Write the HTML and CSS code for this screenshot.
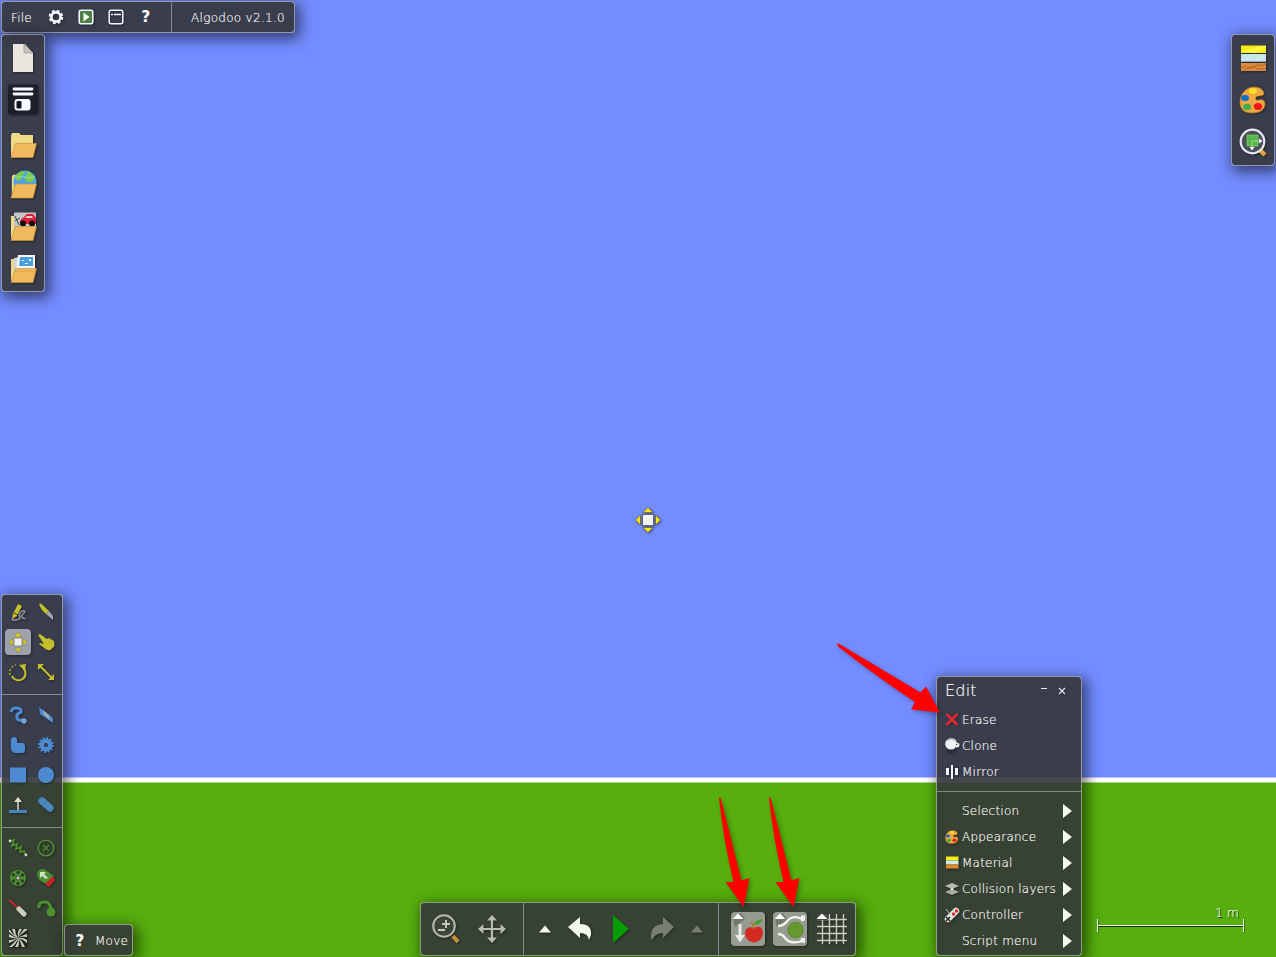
FILE: index.html
```html
<!DOCTYPE html>
<html lang="en">
<head>
<meta charset="utf-8">
<title>Algodoo v2.1.0</title>
<link rel="stylesheet" href="styles.css">
</head>
<body>
<svg class="defs" width="0" height="0">
  <defs>
    <symbol id="palette" viewBox="-14 -14 28 28">
      <path d="M1-13C-7-13-13-6-13 2c0 8 5 11 12 11 9 0 13-4 13-9 0-4-3-5-6-4C3 1 2-1 3-3c2-2 6 0 8-3C11-10 7-13 1-13z" fill="#efa944" stroke="#b97722" stroke-width=".7"/>
      <ellipse cx="0" cy="-9" rx="4" ry="3" fill="#f7e023"/><ellipse cx="-8" cy="-2" rx="4" ry="3" fill="#0f6fc6"/>
      <ellipse cx="-6" cy="7" rx="4" ry="3.300" fill="#3bb04a"/><ellipse cx="5" cy="6.500" rx="4.200" ry="3.600" fill="#ee1818"/>
    </symbol>
    <symbol id="materials" viewBox="-14 -14 28 28">
      <path d="M-12-12.500h25v7.500h-25z" fill="#f7ee10"/><path d="M-12-6l18-6h7v2l-12 5z" fill="#faf43c"/>
      <path d="M-12-4h25v7.500h-25z" fill="#c9e3ec"/><path d="M-9 3L3-4M1 3l11-6" stroke="#dceff6"/><path d="M-12 3.500h25" stroke="#8ba9b2"/>
      <path d="M-12 5h25v8h-25z" fill="#dd8a3c"/><path d="M-12 10c5-4 8 3 13-1s7 0 12-3M-9 12c6-2 8-5 11-3s4 3 10 1" fill="none" stroke="#a65c23" stroke-width=".8"/>
    </symbol>
    <symbol id="folder-back" viewBox="-14 -14 28 28"><path d="M-12 12v-20l1-3h7l2 2h12v18z" fill="#eed984"/></symbol>
    <symbol id="folder-front" viewBox="-14 -14 28 28"><path d="M-12 13l4.500-14h21L10 13z" fill="#f2b95e" stroke="#c98f3c" stroke-width=".7"/></symbol>
  </defs>
</svg>

<main class="scene">
  <svg class="cursor" viewBox="-14 -14 28 28">
    <path d="M0-12.500l5 5H-5zM0 12.500L-5 7.500H5zM-12.500 0l5-5V5zM12.500 0L7.500 5V-5z" fill="#f8e71c" stroke="#665f20" stroke-width=".7"/>
    <path d="M-5.500-5.500h11v11h-11z" fill="#f2f2f2" stroke="#56618f"/>
  </svg>

  <header class="panel menubar">
    <span class="file">File</span>
    <svg class="ic30" viewBox="-15 -15 30 30"><circle r="6" fill="none" stroke="#f4f6ff" stroke-width="2.600" stroke-dasharray="2.700 2.012"/><circle r="4.600" fill="none" stroke="#f4f6ff" stroke-width="2.600"/></svg>
    <svg class="ic30" viewBox="-15 -15 30 30"><rect x="-6.800" y="-6.800" width="13.600" height="13.600" rx="2" fill="#4c8244" stroke="#f4f6ff" stroke-width="1.600"/><path d="M-2.500-4.500L3.500 0l-6 4.500z" fill="#fff"/></svg>
    <svg class="ic30" viewBox="-15 -15 30 30"><rect x="-6.800" y="-6.800" width="13.600" height="13.600" rx="2" fill="none" stroke="#f4f6ff" stroke-width="1.500"/><path d="M-5-2.500h2M-2-2.500H5" stroke="#f4f6ff" stroke-width="1.600"/></svg>
    <span class="help">?</span>
    <span class="title">Algodoo v2.1.0</span>
  </header>

  <nav class="panel files">
    <svg class="ic42" viewBox="-21 -21 42 42"><path d="M-10-14H2l8 9v19h-20z" fill="#ebe6e0"/><path d="M1-14L10-5H1z" fill="#c7c3bc" stroke="#99948d" stroke-width=".7"/></svg>
    <svg class="ic42" viewBox="-21 -21 42 42"><rect x="-15" y="-15.500" width="30" height="30" rx="3" fill="#1d202a"/><path d="M-9-11H9M-9-6H9" stroke="#f8faff" stroke-width="2.800" stroke-linecap="round"/><rect x="-8.500" y="-1" width="16" height="11.500" rx="3" fill="#f8faff"/><rect x="-6.500" y="1" width="5" height="7.500" rx="1" fill="#10131b"/></svg>
    <svg class="ic42" viewBox="-21 -21 42 42"><use href="#folder-back" x="-14" y="-12" width="28" height="28"/><use href="#folder-front" x="-14" y="-12" width="28" height="28" transform="translate(0 .5)"/></svg>
    <svg class="ic42" viewBox="-21 -21 42 42"><use href="#folder-back" x="-14" y="-12" width="28" height="26"/><circle cx="2" cy="-2" r="11.500" fill="#4aa6e6"/><path d="M-8-7q3-5 8-6l2 3-4 2 1 3-5 2zM4-13q6 2 8 8l-4 3-5-1-2-4 3-2z" fill="#83cb43"/><path d="M-8-6q5-3 9-1t11-1" fill="none" stroke="#a3e1f6" stroke-width=".6"/><use href="#folder-front" x="-14" y="-13" width="28" height="28"/></svg>
    <svg class="ic42" viewBox="-21 -21 42 42"><path d="M-12 12v-22h3v22z" fill="#eed984"/><rect x="-9" y="-13.500" width="22" height="18" rx="1" fill="#c3c5c7"/><path d="M-8-10l4 9M-8-5l5-3" stroke="#34513a"/><path d="M-3-3q0-4 3-5l4-4h6l3 4v6H-3z" fill="#df1e36"/><path d="M4-10h5l1 2H2z" fill="#efd1d4"/><circle cx="0" cy="-2.500" r="3" fill="#111"/><circle cx="9" cy="-2.500" r="3" fill="#111"/><use href="#folder-front" x="-14" y="-14" width="28" height="28" transform="translate(0 1.500)"/></svg>
    <svg class="ic42" viewBox="-21 -21 42 42"><path d="M-12 12v-21h4v21z" fill="#eed984"/><path d="M-9-10L8-13l3 17H-9z" fill="#cfd4d6"/><path d="M-5-13h17v16H-7z" fill="#f7f9fa"/><path d="M-3-11h13v9H-4z" fill="#4c9ddd"/><path d="M-1-8h2v1h-2zM6-9h2v2H6zM2-5h3v1H2z" fill="#e8f8ff"/><use href="#folder-front" x="-14" y="-13" width="28" height="28" transform="translate(0 .5)"/><path d="M-8 3H12" stroke="#d99c47" stroke-width=".7"/></svg>
  </nav>

  <nav class="panel props">
    <svg class="ic42" viewBox="-21 -21 42 42"><use href="#materials" x="-14" y="-14" width="28" height="28"/></svg>
    <svg class="ic42" viewBox="-21 -21 42 42"><use href="#palette" x="-14" y="-14" width="28" height="28"/></svg>
    <svg class="ic42" viewBox="-21 -21 42 42"><path d="M7 8l5 5" stroke="#e5a13a" stroke-width="4.500"/><circle cx="-.5" cy="-.5" r="11.800" fill="#4b505b" stroke="#e8eaf4" stroke-width="2.200"/><path d="M-6-7H5V4H-6z" fill="#58b74a" stroke="#87d567" stroke-width=".7"/><path d="M-1 6V-1H7" fill="none" stroke="#9cd98c"/><path d="M-3.500 5h5L-1 8.500zM6-3.500v5L9.500-1z" fill="#fff"/></svg>
  </nav>

  <section class="panel tools">
    <div class="toolset">
      <svg viewBox="-14 -15 28 30"><path d="M-5 6q-2 3 3 2 5-1 4-3-2-3 2-6 4-1 2 2-4 3-1 5 2 1 2 0" fill="none" stroke="#92979f" stroke-width="1.500"/><path d="M0-8l4 2-5 10-5 3 1-5z" fill="#c4bf2d"/><path d="M-4 1l4 2" stroke="#343535"/></svg>
      <svg viewBox="-14 -15 28 30"><path d="M-7-8l2-.500L3-1 0 2q-5-4-7-10z" fill="#c4bf2d"/><path d="M0 2l3-3 4 5v4z" fill="#a1a5ad"/></svg>
      <svg viewBox="-14 -15 28 30"><rect x="-13" y="-13" width="26" height="26" rx="4" fill="#9da1ac"/><path d="M0-10l4 5h-8zM0 10l-4-4h8zM-9 0l4-4v8zM9 0L5 4v-8z" fill="#d7cc18" stroke="#77755b" stroke-width=".5"/><path d="M-4-4h8v8h-8z" fill="#eee" stroke="#8b8d94"/></svg>
      <svg viewBox="-14 -15 28 30"><path d="M-8-7l2-1 7 5 2-1 5 3 .500 5-4 4Q0 9-3 5l-4-3 1-1 4 1z" fill="#c4bf2d"/><path d="M1-1l4 3M3-3l4 3" stroke="#a5a129" stroke-width=".6"/></svg>
      <svg viewBox="-14 -15 28 30"><path d="M5-4a7 7 0 1 1-11 8" fill="none" stroke="#c4bf2d" stroke-width="2"/><path d="M-8 3a8 8 0 0 1 6-10" fill="none" stroke="#a5a331" stroke-width="1.800" stroke-dasharray="2 2"/><path d="M1-7l7-1-1 7z" fill="#c4bf2d"/></svg>
      <svg viewBox="-14 -15 28 30"><path d="M-6-6L6 6" stroke="#c4bf2d" stroke-width="2"/><path d="M-8-8h6l-6 6zM8 8H2l6-6z" fill="#c4bf2d"/></svg>
    </div>
    <div class="toolset">
      <svg viewBox="-14 -15 28 30"><path d="M-7-3q1-4 5-4 6 0 5 4-5 2-4 6 1 3 6 2" fill="none" stroke="#4c8bd2" stroke-width="3"/><circle cx="6" cy="6" r="2.700" fill="#78a1ce"/></svg>
      <svg viewBox="-14 -15 28 30"><path d="M-7-8L7 3v5L-6-1z" fill="#4c8bd2"/><path d="M-3-5l6 5 1 5-6-5z" fill="#a0a8bb"/></svg>
      <svg viewBox="-14 -15 28 30"><path d="M-7-5q0-3 3-3t3 3v3h5q3 0 3 3v4q0 3-3 3h-7q-4-1-4-5z" fill="#4c8bd2"/></svg>
      <svg viewBox="-14 -15 28 30"><circle r="6.800" fill="none" stroke="#4c8bd2" stroke-width="2.400" stroke-dasharray="1.900 1.660"/><circle r="4.200" fill="none" stroke="#4c8bd2" stroke-width="4.500"/><circle r="1.500" fill="#494745"/></svg>
      <svg viewBox="-14 -15 28 30"><path d="M-8-7.500H8v15H-8z" fill="#4c8bd2"/></svg>
      <svg viewBox="-14 -15 28 30"><circle r="8" fill="#4c8bd2"/></svg>
      <svg viewBox="-14 -15 28 30"><path d="M-9 5H9v3H-9z" fill="#4585bd"/><path d="M0 5v-9" stroke="#d9ded0" stroke-width="1.500"/><path d="M-4-3l4-5 4 5z" fill="#d9ded0"/></svg>
      <svg viewBox="-14 -15 28 30"><path d="M-4-4l8 7" stroke="#4584b8" stroke-width="7.500" stroke-linecap="round"/><path d="M-6-1l5-5M-2 2l5-5M1 5l5-5" stroke="#6ba2cd" stroke-width=".8"/></svg>
    </div>
    <div class="toolset">
      <svg viewBox="-14 -15 28 30"><path d="M-8-7l4-1-2 6 5-2-1 5 5-2-1 5 4-1 1 4" fill="none" stroke="#4c912d" stroke-width="1.800"/><circle cx="-8" cy="-7" r="1.400" fill="#d2d7cd"/><circle cx="8" cy="7" r="1.400" fill="#d2d7cd"/></svg>
      <svg viewBox="-14 -15 28 30"><circle r="7.800" fill="none" stroke="#4c912d" stroke-width="1.600"/><path d="M-3-3l6 6M3-3l-6 6" stroke="#4c912d" stroke-width="1.400"/></svg>
      <svg viewBox="-14 -15 28 30"><circle r="8" fill="#4c912d"/><g fill="#30392e"><circle cx="-4.500" cy="-3" r="1.700"/><circle cx="0" cy="-5.500" r="1.700"/><circle cx="4.500" cy="-3" r="1.700"/><circle cx="-4.500" cy="3" r="1.700"/><circle cx="0" cy="5.500" r="1.700"/><circle cx="4.500" cy="3" r="1.700"/><circle r="2.500"/></g><circle r="1.700" fill="#bec6b8"/></svg>
      <svg viewBox="-14 -15 28 30"><path d="M-9-4Q-8-9-2-9L8-2 1 6Q-9 3-9-4z" fill="#4b9030"/><path d="M-6-6h6l-2 2 4 4-2 1-4-3-2 2z" fill="#d5ddca"/><path d="M7-2l2 4-6 7-4-3z" fill="#c82324"/></svg>
      <svg viewBox="-14 -15 28 30"><path d="M-9-8l9 8" stroke="#c92b25" stroke-width="2"/><path d="M1 1l5 5" stroke="#c9cec1" stroke-width="5" stroke-linecap="round"/></svg>
      <svg viewBox="-14 -15 28 30"><path d="M-7 0q-1-6 6-6 5 0 6 7" fill="none" stroke="#4c912d" stroke-width="3.200"/><circle cx="5" cy="4" r="4.500" fill="#4c912d"/></svg>
      <svg viewBox="-14 -15 28 30"><path d="M-9-9H9V9H-9z" fill="#1e241d"/><path d="M0 0Q-4-2-6-9h3Q-3-4 0 0Q-1-5 1-9h3Q1-5 0 0Q2-4 6-9h3v1Q4-5 0 0Q5-3 9-4v3Q4-2 0 0Q5-1 9 2v3Q5 1 0 0Q4 2 7 9h-3Q3 4 0 0Q2 5 0 9h-3Q0 5 0 0Q-1 5-6 9h-3Q-4 5 0 0Q-4 3-9 5v-3Q-4 2 0 0Q-5 1-9-1v-3Q-5-1 0 0Q-5-2-9-6v-3Q-5-3 0 0z" fill="#c5cdbe"/></svg>
    </div>
  </section>

  <div class="panel hint"><span class="help">?</span><span>Move</span></div>

  <nav class="panel controls">
    <svg class="w46" viewBox="-23 -26 46 52"><path d="M7 7l5 6" stroke="#c79035" stroke-width="4"/><circle cx="-2" cy="-3" r="10.800" fill="#3d463b" stroke="#b7bbb2" stroke-width="2"/><path d="M-4-5H4M0-9v8M-8 1h7" stroke="#c5c9c0" stroke-width="1.900"/></svg>
    <svg class="w46" viewBox="-23 -26 46 52"><path d="M0-9V9M-9 0H9" stroke="#b7bbb2" stroke-width="2.200"/><path d="M0-14l5 5.500H-5zM0 14L-5 8.500H5zM-14 0l5.500-5V5zM14 0L8.500 5V-5z" fill="#b7bbb2"/></svg>
    <i class="bar"></i>
    <svg class="w42" viewBox="-21 -26 42 52"><path d="M0-3.500L6 3.500H-6z" fill="#f4faef"/></svg>
    <svg class="w28" viewBox="-14 -26 28 52"><path d="M-12-2L0-12v7Q12-5 11 6l-2 5Q8 4 0 4v5z" fill="#f1f7ed"/></svg>
    <svg class="w54" viewBox="-27 -26 54 52"><path d="M-8-14L8 0l-16 14z" fill="#069c04"/></svg>
    <svg class="w28" viewBox="-14 -26 28 52"><path d="M12-2L1-12v7Q-12-4-11 9l1 2Q-7 4 1 4v5z" fill="#777e73"/></svg>
    <svg class="w42" viewBox="-21 -26 42 52"><path d="M0-3.500L6 3.500H-6z" fill="#777e73"/></svg>
    <i class="bar gap"></i>
    <svg class="w42" viewBox="-21 -26 42 52"><rect x="-17" y="-17" width="34" height="34" rx="4" fill="#969c92"/><path d="M-15-10l8-6 4 6-10 8z" fill="#71786c"/><path d="M-10-15.500l5.500 5.500h-11z" fill="#fff"/><path d="M-8-5V6" stroke="#e9ede5" stroke-width="3"/><path d="M-13 6h10l-5 7.500z" fill="#e9ede5"/><path d="M6-1Q14-5 15 3q0 8-7 10-2 1-4 0-7-2-7-9Q-2-4 6-1z" fill="#d32b24"/><path d="M6 0q0-5-3-7" fill="none" stroke="#b87824" stroke-width="1.800"/><path d="M6-4q1-6 9-6-2 6-9 6z" fill="#4c9b30"/></svg>
    <svg class="w42" viewBox="-21 -26 42 52"><rect x="-17" y="-17" width="34" height="34" rx="4" fill="#969c92"/><path d="M-15-10l8-6 4 6-10 8z" fill="#71786c"/><path d="M-10-15.500l5.500 5.500h-11z" fill="#fff"/><circle cx="5.500" cy="1" r="7.800" fill="#64992e" stroke="#507d29" stroke-width=".6"/><path d="M-12-3C-3-3-4-9 1-11q5-2 11 1M-12 5c8 0 6 7 13 8q5 1 11-1" fill="none" stroke="#f0f4ec" stroke-width="2.300"/><path d="M11-13.500h4v5l-4 1zM11 9h4v5l-5-1z" fill="#f0f4ec"/></svg>
    <svg class="w42" viewBox="-21 -26 42 52"><path d="M-9.500-15v30M-2.500-15v30M4.500-15v30M11.500-15v30M-15-9.500h30M-15-2.500h30M-15 4.500h30M-15 11.500h30" stroke="#c9cec5" stroke-width="1.400"/><path d="M-15-15h11v6h-11z" fill="#444d42"/><path d="M-10-15.500l5.500 5.500h-11z" fill="#fff"/></svg>
  </nav>

  <aside class="panel edit">
    <div class="edit-head"><span class="edit-title">Edit</span><i class="minimize"></i><svg class="close" viewBox="0 0 8 8"><path d="M1 1l6 6M7 1L1 7" stroke="#e4e7ef" stroke-width="1.200"/></svg></div>
    <div class="item"><svg viewBox="-7 -7 14 14"><path d="M-5.500-6l11 11M5.500-6l-11 11" stroke="#df2931" stroke-width="2.700"/></svg><span>Erase</span></div>
    <div class="item"><svg viewBox="-7 -7 14 14"><path d="M-4 3v4M-1 3v5M3 3v4" stroke="#24262d"/><ellipse cx="-1" cy="-2" rx="5.800" ry="5.500" fill="#f0f1f5"/><path d="M-6-5q4-5 9-2l2 2-6-1z" fill="#b9bbc2"/><circle cx="5" cy="-1" r="2.500" fill="#e5e6ec"/><path d="M4-2h1v1H4z" fill="#333"/></svg><span>Clone</span></div>
    <div class="item"><svg viewBox="-7 -7 14 14"><path d="M-6-4h3v7h-3zM-1-7h2V7h-2zM3-4h3v7H3z" fill="#f4f6fd"/></svg><span>Mirror</span></div>
    <i class="rule"></i>
    <div class="item sub"><svg viewBox="-7 -7 14 14"></svg><span>Selection</span></div>
    <div class="item sub"><svg viewBox="-7 -7 14 14"><use href="#palette" x="-7" y="-7" width="14" height="14"/></svg><span>Appearance</span></div>
    <div class="item sub"><svg viewBox="-7 -7 14 14"><path d="M-6-6.500H6.500v4H-6z" fill="#f7ee10"/><path d="M-6-2.500H6.500v4H-6z" fill="#d2eaea"/><path d="M-6 1.500H6.500v4H-6z" fill="#dd8a2c"/></svg><span>Material</span></div>
    <div class="item sub"><svg viewBox="-7 -7 14 14"><path d="M-7 3l7-3 7 3-7 3z" fill="#a9ada5"/><path d="M-7-3l7-3 7 3-7 3z" fill="#b7bbb3"/><path d="M-2 0l2-1 2 1-2 1z" fill="#f5f7f1"/></svg><span>Collision layers</span></div>
    <div class="item sub"><svg viewBox="-7 -7 14 14"><path d="M-6-6l3 4" stroke="#c5c9c1"/><path d="M-4 4L4-4" stroke="#e2e4de" stroke-width="6.500" stroke-linecap="round"/><path d="M-6 2l4 4M-2 2l-4 4" stroke="#20231e" stroke-width="1.500"/><circle cx="1.500" cy="-1" r="1.700" fill="#d92924"/><circle cx="4.500" cy="-4" r="1.700" fill="#d92924"/></svg><span>Controller</span></div>
    <div class="item sub"><svg viewBox="-7 -7 14 14"></svg><span>Script menu</span></div>
  </aside>

  <div class="scale"><span>1 m</span><svg viewBox="0 0 148 15"><path d="M2 1.500v13M148 1.500v13M1 8.500h147" stroke="#173500"/><path d="M1.500 1v13M147.500 1v13M1 7.500h146" stroke="#fff"/></svg></div>

  <svg class="arrows" viewBox="0 0 1276 957">
    <g fill="#fe0000">
      <path d="M837 644.500Q838 643 841 645L920.500 692.500 926 686.500 940 712.500 911 709.500 915 702Q880 679 838 646.500z"/>
      <path d="M719 798Q720 796 721 799L741.500 880.500 749.500 878 743.500 907 725.500 882 733.500 882Q723 838 719 798z"/>
      <path d="M769 798Q770 796 771 799L791.500 880.500 799.500 878 793.500 907 775.500 882 783.500 882Q773 838 769 798z"/>
    </g>
  </svg>
</main>
</body>
</html>
```
FILE: styles.css
```css
* { box-sizing: border-box; }
body {
  margin: 0;
  overflow: hidden;
  font: 200 12px/16px "DejaVu Sans", "DejaVu Sans Light", sans-serif;
  letter-spacing: .22px;
  color: #fff;
  -webkit-text-stroke: .15px #fff;
}
svg { display: block; flex: none; overflow: visible; }
.defs { position: absolute; }

.scene {
  position: relative;
  width: 1276px;
  height: 957px;
  overflow: hidden;
  background: linear-gradient(#738cff 777px, #fff 778px, #fff 782px, #57ae0e 783px);
}

/* Floating panels over the simulation canvas */
.panel {
  position: absolute;
  border: 1px solid rgba(150, 154, 158, .85);
  border-radius: 4px;
  background: rgba(52, 53, 57, .9);
  background-clip: padding-box;
  box-shadow: 3px 4px 14px 2px rgba(0, 0, 0, .55);
}
.panel svg { filter: drop-shadow(1px 1px 1px rgba(0, 0, 0, .4)); }

.menubar { left: 1px; top: 1px; width: 294px; height: 32px; display: flex; align-items: center; }
.file { width: 39px; padding: 1px 0 0 9px; }
.ic30 { width: 30px; height: 30px; }
.help { width: 30px; text-align: center; font-weight: 700; font-size: 15px; }
.title {
  margin-left: 10px;
  padding-left: 19px;
  height: 30px;
  line-height: 32px;
  border-left: 1px solid #85898f;
  letter-spacing: .3px;
  white-space: nowrap;
}

.files { left: 1px; top: 34px; width: 44px; height: 258px; padding-top: 2px; }
.props { left: 1231px; top: 34px; width: 44px; height: 132px; padding-top: 2px; }
.ic42 { width: 42px; height: 42px; }

.tools { left: 1px; top: 594px; width: 62px; height: 362px; padding-top: 2px; }
.toolset { display: grid; grid-template-columns: 28px 28px; grid-auto-rows: 30px; padding-left: 2px; }
.toolset svg { width: 28px; height: 30px; }
.toolset + .toolset { margin-top: 7px; border-top: 1px solid #85898f; padding-top: 5px; }

.hint { left: 64px; top: 924px; width: 69px; height: 32px; display: flex; align-items: center; padding-top: 1px; }

.controls { left: 420px; top: 902px; width: 436px; height: 54px; display: flex; align-items: center; padding: 0 2px; }
.w46 { width: 46px; height: 52px; }
.w42 { width: 42px; height: 52px; }
.w28 { width: 28px; height: 52px; }
.w54 { width: 54px; height: 52px; }
.bar { width: 1px; height: 52px; margin-left: 8px; background: #85898f; }
.bar.gap { margin: 0 8px 0 0; }

.edit { left: 936px; top: 676px; width: 146px; height: 280px; }
.edit-head { display: flex; height: 30px; padding: 0 15px 0 8px; align-items: flex-start; }
.edit-title { flex: 1; font-size: 16px; line-height: 27px; }
.minimize { width: 6px; height: 1px; margin: 11px 11px 0 0; background: #f2f4fa; }
.close { width: 8px; height: 8px; margin-top: 10px; }
.item { display: flex; align-items: center; height: 26px; padding-left: 8px; white-space: nowrap; }
.item svg { width: 14px; height: 14px; margin-right: 3px; }
.item.sub::after {
  content: "";
  margin: 0 9px 1px auto;
  border-left: 9px solid #f4faef;
  border-top: 7px solid transparent;
  border-bottom: 7px solid transparent;
}
.rule { display: block; height: 1px; margin: 6px 0; background: #7d8b80; }

.scale { position: absolute; left: 1096px; top: 905px; width: 148px; text-align: right; text-shadow: 1px 1px 0 #000; }
.scale span { display: block; padding-right: 5px; height: 13px; }
.scale svg { width: 148px; height: 15px; }

.cursor { position: absolute; left: 634px; top: 506px; width: 28px; height: 28px; filter: drop-shadow(1px 1px 1px rgba(0, 0, 0, .4)); }
.arrows { position: absolute; left: 0; top: 0; width: 1276px; height: 957px; pointer-events: none; filter: drop-shadow(2px 2px 2px rgba(0, 0, 0, .3)); }
```
